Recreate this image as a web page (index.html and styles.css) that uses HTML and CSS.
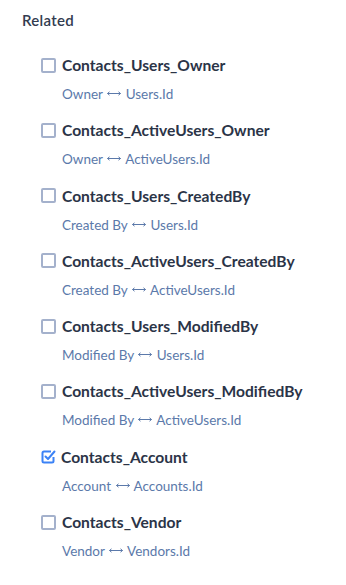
FILE: index.html
```html
<!DOCTYPE html>
<html>
<head>
<meta charset="utf-8">
<link rel="stylesheet" href="styles.css">
</head>
<body>
<div class="panel">
  <h2 class="heading">Related</h2>
  <ul class="list">
    <li class="item">
      <div class="row"><span class="box"></span><span class="name">Contacts_Users_Owner</span></div>
      <div class="rel">Owner <svg class="arr" viewBox="0 0 14 7"><path d="M0.5 3.5H13.5M0.5 3.5L2.5 1.8M0.5 3.5L2.5 5.2M13.5 3.5L11.5 1.8M13.5 3.5L11.5 5.2"/></svg> Users.Id</div>
    </li>
    <li class="item">
      <div class="row"><span class="box"></span><span class="name">Contacts_ActiveUsers_Owner</span></div>
      <div class="rel">Owner <svg class="arr" viewBox="0 0 14 7"><path d="M0.5 3.5H13.5M0.5 3.5L2.5 1.8M0.5 3.5L2.5 5.2M13.5 3.5L11.5 1.8M13.5 3.5L11.5 5.2"/></svg> ActiveUsers.Id</div>
    </li>
    <li class="item">
      <div class="row"><span class="box"></span><span class="name">Contacts_Users_CreatedBy</span></div>
      <div class="rel">Created By <svg class="arr" viewBox="0 0 14 7"><path d="M0.5 3.5H13.5M0.5 3.5L2.5 1.8M0.5 3.5L2.5 5.2M13.5 3.5L11.5 1.8M13.5 3.5L11.5 5.2"/></svg> Users.Id</div>
    </li>
    <li class="item">
      <div class="row"><span class="box"></span><span class="name">Contacts_ActiveUsers_CreatedBy</span></div>
      <div class="rel">Created By <svg class="arr" viewBox="0 0 14 7"><path d="M0.5 3.5H13.5M0.5 3.5L2.5 1.8M0.5 3.5L2.5 5.2M13.5 3.5L11.5 1.8M13.5 3.5L11.5 5.2"/></svg> ActiveUsers.Id</div>
    </li>
    <li class="item">
      <div class="row"><span class="box"></span><span class="name">Contacts_Users_ModifiedBy</span></div>
      <div class="rel">Modified By <svg class="arr" viewBox="0 0 14 7"><path d="M0.5 3.5H13.5M0.5 3.5L2.5 1.8M0.5 3.5L2.5 5.2M13.5 3.5L11.5 1.8M13.5 3.5L11.5 5.2"/></svg> Users.Id</div>
    </li>
    <li class="item">
      <div class="row"><span class="box"></span><span class="name">Contacts_ActiveUsers_ModifiedBy</span></div>
      <div class="rel">Modified By <svg class="arr" viewBox="0 0 14 7"><path d="M0.5 3.5H13.5M0.5 3.5L2.5 1.8M0.5 3.5L2.5 5.2M13.5 3.5L11.5 1.8M13.5 3.5L11.5 5.2"/></svg> ActiveUsers.Id</div>
    </li>
    <li class="item">
      <div class="row"><svg class="box-checked" viewBox="0 0 16 16"><path class="cb-frame" d="M11 2.5H4A1.5 1.5 0 0 0 2.5 4V12A1.5 1.5 0 0 0 4 13.5H12A1.5 1.5 0 0 0 13.5 12V8"/><path class="cb-tick" d="M5.5 7.5L8 10L14.5 2.5"/></svg><span class="name">Contacts_Account</span></div>
      <div class="rel">Account <svg class="arr" viewBox="0 0 14 7"><path d="M0.5 3.5H13.5M0.5 3.5L2.5 1.8M0.5 3.5L2.5 5.2M13.5 3.5L11.5 1.8M13.5 3.5L11.5 5.2"/></svg> Accounts.Id</div>
    </li>
    <li class="item">
      <div class="row"><span class="box"></span><span class="name">Contacts_Vendor</span></div>
      <div class="rel">Vendor <svg class="arr" viewBox="0 0 14 7"><path d="M0.5 3.5H13.5M0.5 3.5L2.5 1.8M0.5 3.5L2.5 5.2M13.5 3.5L11.5 1.8M13.5 3.5L11.5 5.2"/></svg> Vendors.Id</div>
    </li>
  </ul>
</div>
</body>
</html>
```
FILE: styles.css
```css
html, body {
  margin: 0;
  padding: 0;
  background: #ffffff;
}
body {
  font-family: Lato, "Noto Sans", sans-serif;
  color: #2d3748;
}
.panel {
  padding: 11px 0 0 22px;
}
.heading {
  margin: 0;
  font-size: 15px;
  font-weight: 600;
  letter-spacing: 0.3px;
  line-height: 19px;
  color: #323c50;
}
.list {
  list-style: none;
  margin: 0;
  padding: 25px 0 0 19px;
}
.item {
  height: 65.3px;
}
.row {
  display: flex;
  align-items: center;
  gap: 6px;
  height: 20px;
}
.box {
  width: 11px;
  height: 11px;
  border: 2px solid #a4b1cc;
  border-radius: 2px;
  flex: none;
}
.box-checked {
  width: 16px;
  height: 16px;
  margin: 0 -1px 0 -1px;
  flex: none;
}
.cb-frame {
  fill: none;
  stroke: #3b82f6;
  stroke-width: 2;
}
.cb-tick {
  fill: none;
  stroke: #3b82f6;
  stroke-width: 2;
  stroke-linecap: round;
  stroke-linejoin: round;
}
.name {
  font-size: 15.6px;
  font-weight: 700;
  color: #2b3447;
  line-height: 20px;
}
.rel {
  margin-top: 11px;
  padding-left: 21px;
  font-size: 13.5px;
  line-height: 17px;
  color: #5b79aa;
}
.arr {
  width: 14px;
  height: 7px;
  vertical-align: 2px;
  margin: 0 1px;
}
.arr path {
  fill: none;
  stroke: #5b79aa;
  stroke-width: 1;
}
```
